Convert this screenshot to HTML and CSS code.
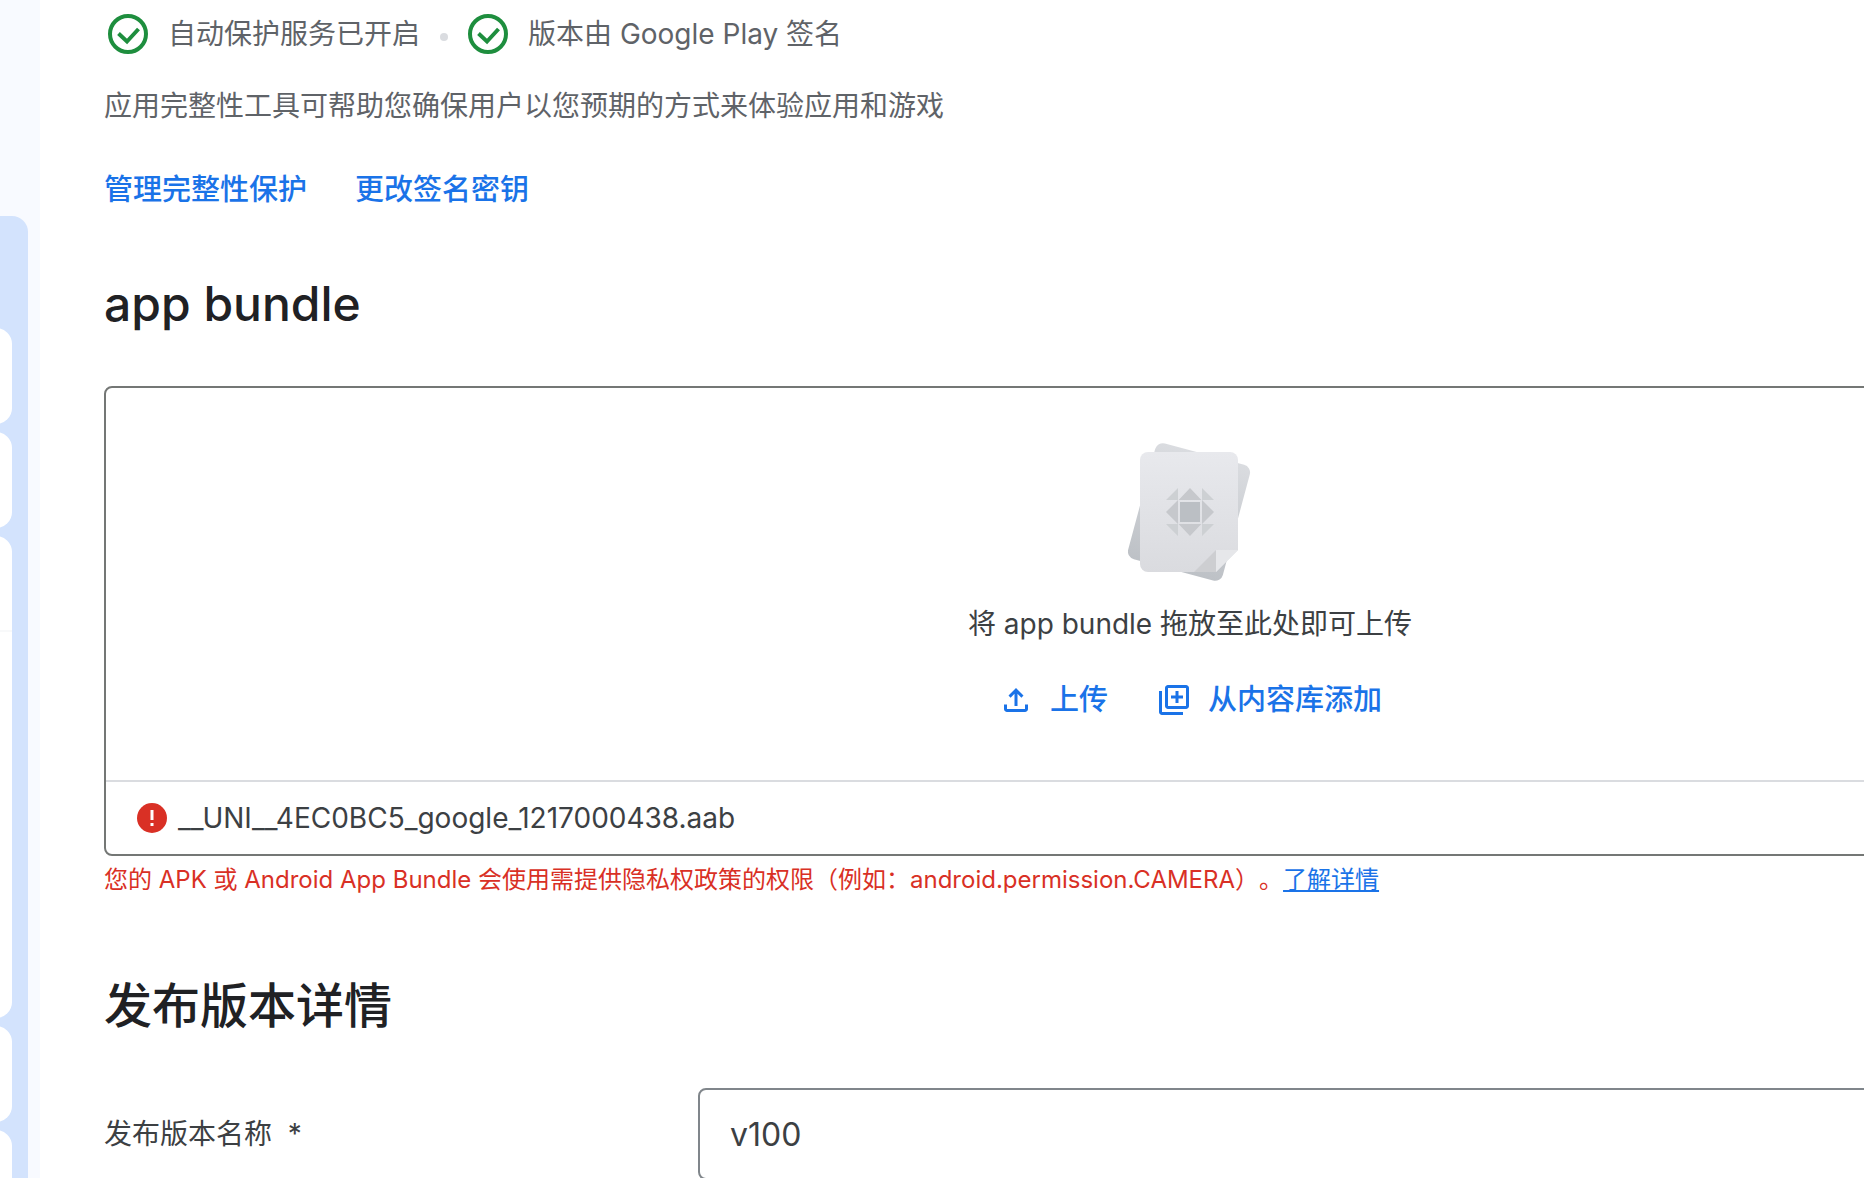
FILE: index.html
```html
<!DOCTYPE html>
<html lang="zh-CN">
  <head>
    <meta charset="UTF-8">
    <meta name="viewport" content="width=device-width, initial-scale=1.0">
    <title>发布版本详情</title>
    <link rel="stylesheet" href="styles.css">
  </head>
  <body>
    <!-- Side navigation -->
    <aside class="sidebar">
      <div class="side-panel">
        <div class="side-card"></div>
        <div class="side-card"></div>
        <div class="side-card side-card-tall"></div>
        <div class="side-card"></div>
        <div class="side-card"></div>
      </div>
    </aside>

    <main class="content">
      <!-- Integrity -->
      <section class="integrity">
        <div class="status-row">
          <svg class="check-icon" viewBox="0 0 48 48" aria-hidden="true">
            <circle cx="24" cy="24" r="18" />
            <path d="M14.5 23.5l8.5 8 11.5-12.5" />
          </svg>
          <span class="status-text">自动保护服务已开启</span>
          <span class="dot"></span>
          <svg class="check-icon" viewBox="0 0 48 48" aria-hidden="true">
            <circle cx="24" cy="24" r="18" />
            <path d="M14.5 23.5l8.5 8 11.5-12.5" />
          </svg>
          <span class="status-text">版本由 Google Play 签名</span>
        </div>
        <p class="description">应用完整性工具可帮助您确保用户以您预期的方式来体验应用和游戏</p>
        <div class="link-row">
          <button type="button" class="text-button">管理完整性保护</button>
          <button type="button" class="text-button">更改签名密钥</button>
        </div>
      </section>

      <!-- App bundle upload -->
      <section>
        <h2>app bundle</h2>
        <div class="upload-box">
          <div class="drop-area">
            <svg class="bundle-art" viewBox="84 66 372 420" aria-hidden="true">
              <defs>
                <linearGradient id="back" x1="0" y1="0" x2="0" y2="1">
                  <stop offset="0" stop-color="#dadce0" />
                  <stop offset="1" stop-color="#bdc1c6" />
                </linearGradient>
                <linearGradient id="front" x1="0" y1="0" x2="0" y2="1">
                  <stop offset="0" stop-color="#e8e9ed" />
                  <stop offset="1" stop-color="#dadbdf" />
                </linearGradient>
              </defs>
              <rect x="120" y="96" width="294" height="360" rx="24" fill="url(#back)" transform="rotate(15 267 276)" />
              <path fill="url(#front)" d="M144 96h246a24 24 0 0 1 24 24v270l-66 66H144a24 24 0 0 1-24-24V120a24 24 0 0 1 24-24z" />
              <path fill="#cdced1" d="M348 390v66h-66z" />
              <path fill="#e6e7ea" d="M348 390h66l-66 66z" />
              <path fill="#bbbfc4" d="M240 246h60v60h-60z" />
              <path fill="#c6c8cc" d="M270 204l34 36h-68zM270 348l34-36h-68zM198 276l36-36v72zM342 276l-36-36v72z" />
              <path fill="#cdd0d3" d="M234 204v36h-36zM306 204l36 36h-36zM198 312h36v36zM306 312h36l-36 36z" />
            </svg>
            <p class="drop-text">将 app bundle 拖放至此处即可上传</p>
            <div class="drop-actions">
              <button type="button" class="text-button">
                <svg class="button-icon" viewBox="0 0 24 24" aria-hidden="true">
                  <path d="M11 16V7.85l-2.6 2.6L7 9l5-5 5 5-1.4 1.45-2.6-2.6V16zM6 20q-.825 0-1.412-.587T4 18v-3h2v3h12v-3h2v3q0 .825-.587 1.413T18 20z" />
                </svg>
                上传
              </button>
              <button type="button" class="text-button">
                <svg class="button-icon" viewBox="0 0 24 24" aria-hidden="true">
                  <path d="M4 6H2v14c0 1.1.9 2 2 2h14v-2H4V6zm16-4H8c-1.1 0-2 .9-2 2v12c0 1.1.9 2 2 2h12c1.1 0 2-.9 2-2V4c0-1.1-.9-2-2-2zm0 14H8V4h12v12zm-7-2h2v-3h3V9h-3V6h-2v3h-3v2h3z" />
                </svg>
                从内容库添加
              </button>
            </div>
          </div>
          <div class="file-row">
            <svg class="error-icon" viewBox="0 0 36 36" aria-hidden="true">
              <circle cx="18" cy="18" r="15" fill="#d93025" />
              <path fill="#fff" d="M16.5 10h3v10h-3zM16.5 23h3v3h-3z" />
            </svg>
            <span>__UNI__4EC0BC5_google_1217000438.aab</span>
          </div>
        </div>
        <p class="error-text">您的 APK 或 Android App Bundle 会使用需提供隐私权政策的权限（例如：android.permission.CAMERA）。<a href="#">了解详情</a></p>
      </section>

      <!-- Release details -->
      <section>
        <h2>发布版本详情</h2>
        <div class="form-row">
          <label for="release-name">发布版本名称&nbsp; *</label>
          <input type="text" id="release-name" value="v100">
        </div>
      </section>
    </main>
  </body>
</html>
```

FILE: styles.css
```css
* {
  box-sizing: border-box;
}

body {
  display: flex;
  height: 100vh;
  margin: 0;
  overflow: hidden;
  background: #fff;
  color: #3c4043;
  font-family: Inter, "Noto Sans CJK SC", sans-serif;
  font-size: 28px;
  line-height: 40px;
  text-spacing-trim: space-all;
}

h2 {
  margin: 0 0 52px;
  color: #202124;
  font-size: 48px;
  font-weight: 500;
  line-height: 60px;
}

p {
  margin: 0;
}

/* Side navigation */
.sidebar {
  display: flex;
  flex: none;
  width: 40px;
  padding: 216px 12px 0 0;
  background: #f8faff;
}

.side-panel {
  display: flex;
  flex: 1;
  flex-direction: column;
  gap: 8px;
  padding: 112px 16px 0 0;
  overflow: hidden;
  background: #d3e3fd;
  border-radius: 0 16px 0 0;
}

.side-card {
  flex: none;
  height: 96px;
  margin-left: -24px;
  background: #fff;
  border-radius: 16px;
}

.side-card-tall {
  height: 482px;
}

.side-card-tall::before {
  content: "";
  display: block;
  height: 94px;
  border-bottom: 2px solid #f8f9fa;
}

/* Main column, runs past the right edge of the window */
.content {
  flex: 1;
  min-width: 0;
  margin-right: -412px;
  padding: 10px 0 0 64px;
}

section {
  margin-bottom: 80px;
}

.integrity {
  margin-bottom: 60px;
}

.status-row,
.description,
.error-text {
  white-space: nowrap;
}

.status-row {
  display: flex;
  align-items: center;
  height: 48px;
  color: #5f6368;
}

.status-text {
  margin-left: 16px;
}

.check-icon {
  flex: none;
  width: 48px;
  height: 48px;
  fill: none;
  stroke: #1e8e3e;
  stroke-width: 4;
}

.dot {
  width: 8px;
  height: 8px;
  margin: 6px 16px 0 20px;
  background: #dadce0;
  border-radius: 50%;
}

.description {
  margin-top: 28px;
  color: #5f6368;
}

.link-row,
.drop-actions {
  display: flex;
  gap: 48px;
}

.link-row {
  margin-top: 40px;
}

.text-button {
  display: flex;
  align-items: center;
  gap: 16px;
  height: 48px;
  padding: 0;
  background: none;
  border: none;
  color: #1a73e8;
  font: inherit;
  font-size: 29px;
  font-weight: 500;
  cursor: pointer;
}

.button-icon {
  width: 36px;
  height: 36px;
  fill: currentColor;
}

/* Upload box */
.upload-box {
  border: 2px solid #747775;
  border-radius: 8px;
}

.drop-area {
  display: flex;
  flex-direction: column;
  align-items: center;
  padding: 54px 0 56px;
  border-bottom: 2px solid #dadce0;
}

.bundle-art {
  width: 124px;
  height: 140px;
}

.drop-text {
  margin: 22px 0 32px;
}

.file-row {
  display: flex;
  align-items: center;
  gap: 8px;
  height: 72px;
  padding: 0 28px;
}

.error-icon {
  width: 36px;
  height: 36px;
}

.error-text {
  margin-top: 8px;
  color: #d93025;
  font-size: 24px;
  line-height: 32px;
}

.error-text a {
  color: #1a73e8;
}

/* Release details */
.form-row {
  display: grid;
  grid-template-columns: 594px 1fr;
  align-items: center;
}

input[type="text"] {
  height: 92px;
  padding: 0 30px;
  background: #fff;
  border: 2px solid #80868b;
  border-radius: 8px;
  color: #3c4043;
  font: inherit;
  font-size: 32px;
}
```
